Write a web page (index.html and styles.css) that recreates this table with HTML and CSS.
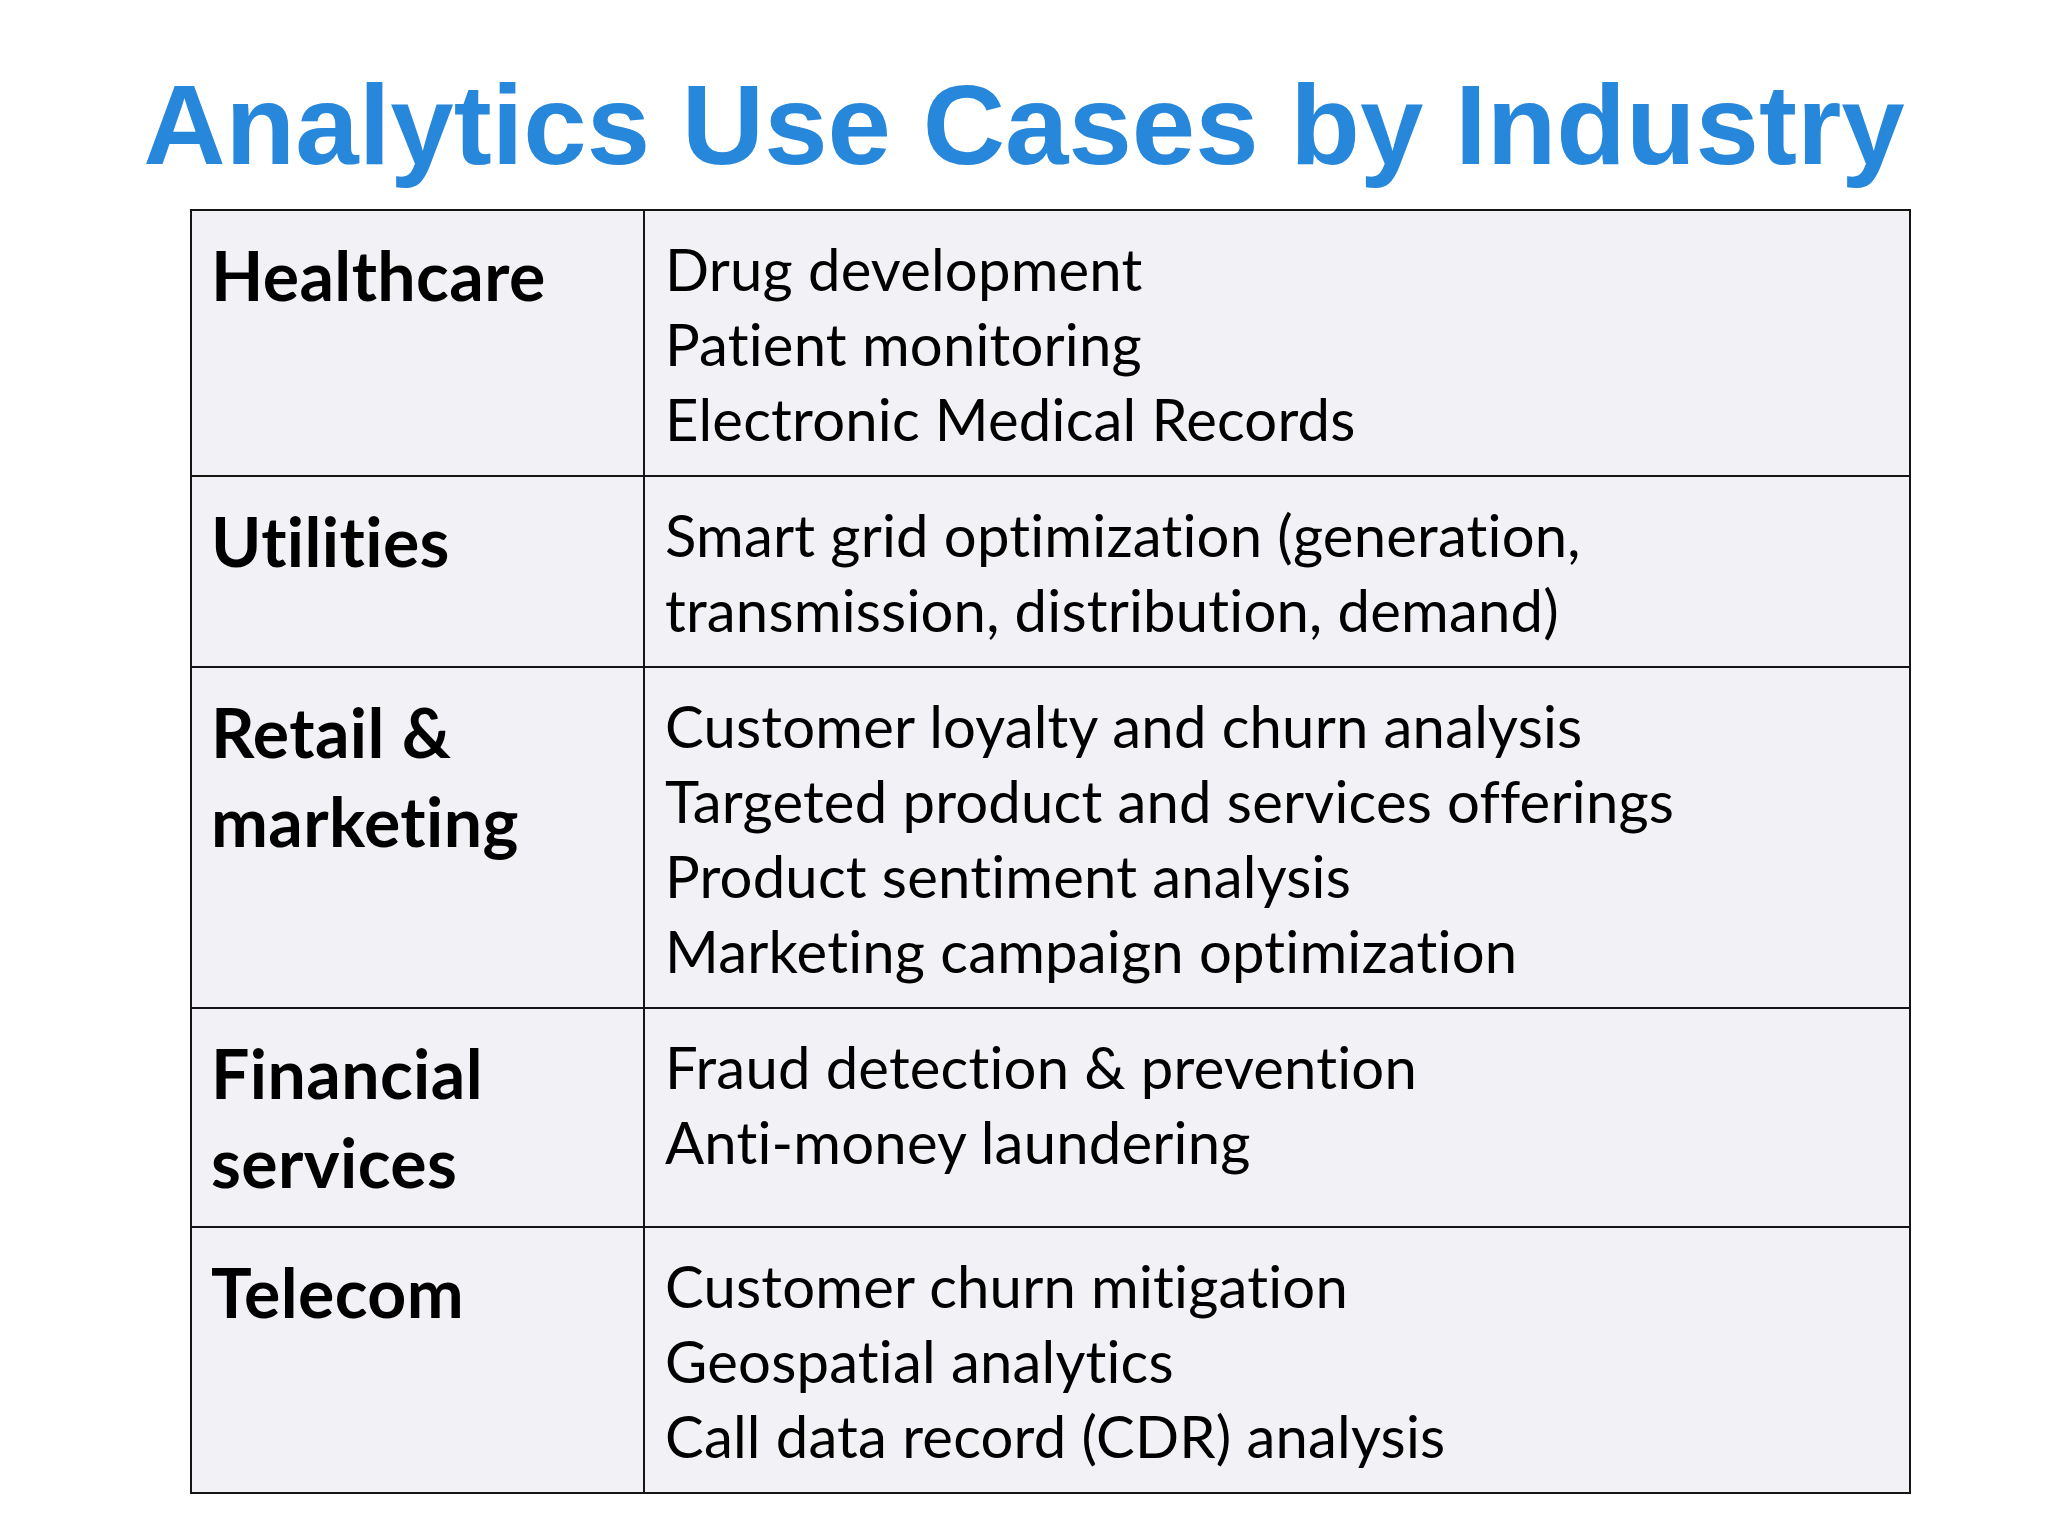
FILE: index.html
```html
<!DOCTYPE html>
<html lang="en">
<head>
<meta charset="utf-8">
<title>Analytics Use Cases by Industry</title>
<link rel="stylesheet" href="styles.css">
</head>
<body>
<main class="slide">
  <h1 class="title">Analytics Use Cases by Industry</h1>
  <table class="cases">
    <colgroup><col class="col-industry"><col class="col-uses"></colgroup>
    <tbody>
      <tr>
        <th class="industry">Healthcare</th>
        <td class="uses">Drug development<br>Patient monitoring<br>Electronic Medical Records</td>
      </tr>
      <tr>
        <th class="industry">Utilities</th>
        <td class="uses">Smart grid optimization (generation,<br>transmission, distribution, demand)</td>
      </tr>
      <tr>
        <th class="industry">Retail &amp;<br>marketing</th>
        <td class="uses">Customer loyalty and churn analysis<br>Targeted product and services offerings<br>Product sentiment analysis<br>Marketing campaign optimization</td>
      </tr>
      <tr>
        <th class="industry">Financial<br>services</th>
        <td class="uses">Fraud detection &amp; prevention<br>Anti-money laundering</td>
      </tr>
      <tr>
        <th class="industry">Telecom</th>
        <td class="uses">Customer churn mitigation<br>Geospatial analytics<br>Call data record (CDR) analysis</td>
      </tr>
    </tbody>
  </table>
</main>
</body>
</html>
```
FILE: styles.css
```css
html, body {
  margin: 0;
  padding: 0;
  background: #ffffff;
}

.slide {
  width: 2048px;
  height: 1536px;
  box-sizing: border-box;
  padding-top: 67px;
}

.title {
  margin: 0;
  font-family: "Liberation Sans", Arial, sans-serif;
  font-weight: 700;
  font-size: 114px;
  line-height: 115px;
  color: #2787da;
  text-align: center;
}

.cases {
  margin: 27px 0 0 190px;
  width: 1721px;
  table-layout: fixed;
  border-collapse: collapse;
  background: #f2f1f5;
  color: #000;
}

.col-industry { width: 453px; }

.cases th,
.cases td {
  border: 2px solid #151515;
  vertical-align: top;
  text-align: left;
  font-family: Lato, "Open Sans", sans-serif;
  font-variant-ligatures: none;
}

.industry {
  padding: 19px 16px 20px 19px;
  font-weight: 700;
  font-size: 68px;
  line-height: 89px;
  letter-spacing: 0.4px;
}

.uses {
  padding: 20px 16px 19px 20px;
  font-weight: 400;
  font-size: 58px;
  line-height: 75px;
  letter-spacing: 0.2px;
}
```
